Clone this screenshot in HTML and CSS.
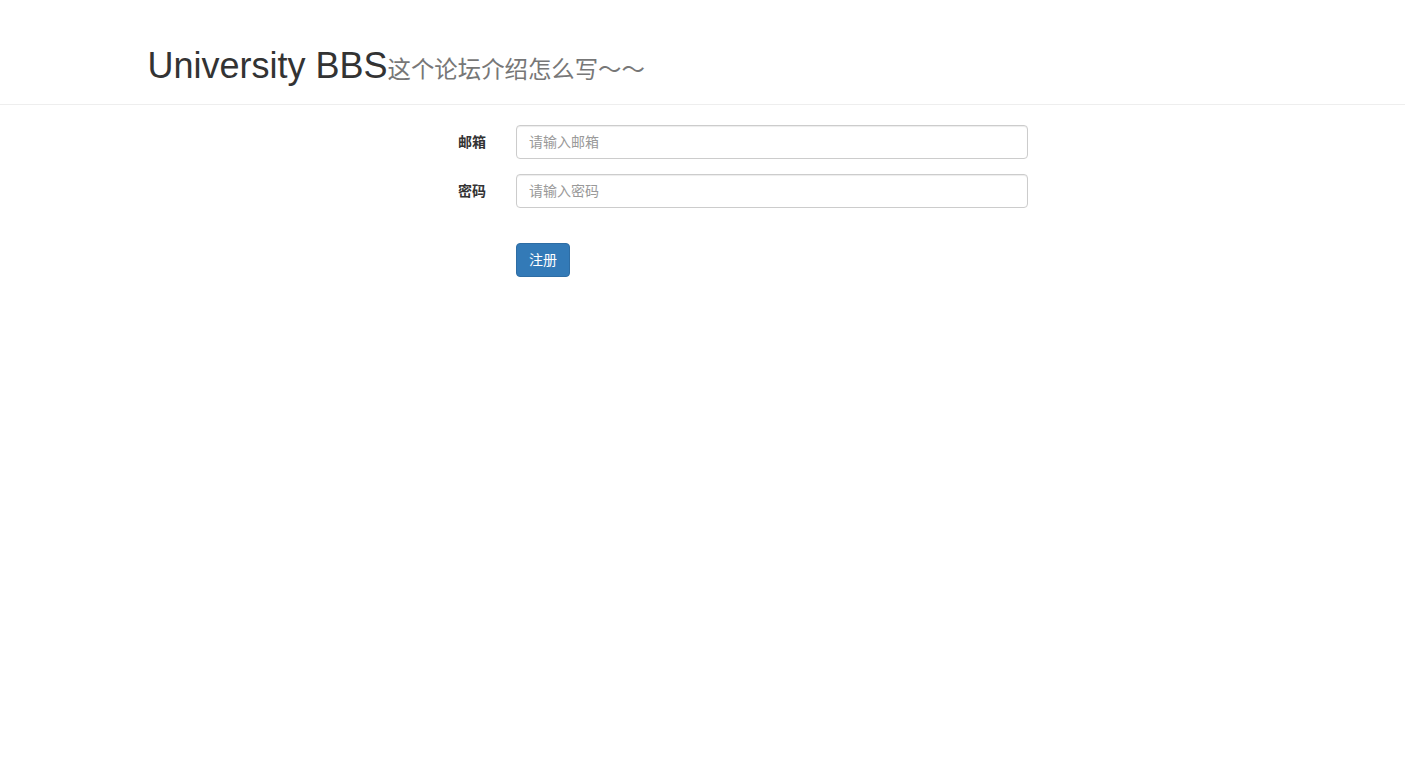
FILE: index.html
```html
<!DOCTYPE html>
<html lang="zh-CN">
<head>
<meta charset="utf-8">
<title>University BBS</title>
<link rel="stylesheet" href="styles.css">
</head>
<body>
<header class="page-header">
  <div class="container">
    <h1 class="title">University BBS<small class="subtitle">这个论坛介绍怎么写～～</small></h1>
  </div>
</header>
<main class="container">
  <form class="form-horizontal">
    <div class="form-group">
      <label class="control-label" for="email">邮箱</label>
      <div class="control-col"><input class="form-control" id="email" type="email" placeholder="请输入邮箱"></div>
    </div>
    <div class="form-group">
      <label class="control-label" for="pwd">密码</label>
      <div class="control-col"><input class="form-control" id="pwd" type="password" placeholder="请输入密码"></div>
    </div>
    <div class="form-group form-actions">
      <div class="spacer"></div>
      <div class="control-col"><button class="btn-primary" type="submit">注册</button></div>
    </div>
  </form>
</main>
</body>
</html>
```
FILE: styles.css
```css
html, body {
  margin: 0;
  padding: 0;
  background: #fff;
}
body {
  font-family: "Liberation Sans", "Noto Sans CJK SC", sans-serif;
  font-size: 14px;
  line-height: 1.42857;
  color: #333;
}
.container {
  width: 1170px;
  margin: 0 auto;
  padding: 0 15px;
  box-sizing: border-box;
}
.page-header {
  border-bottom: 1px solid #eee;
  padding-top: 46px;
  padding-bottom: 8px;
  margin-bottom: 20px;
}
.title {
  margin: 0 0 10px 0;
  padding-left: 15px;
  font-size: 36px;
  font-weight: 500;
  line-height: 1.1;
  color: #333;
  font-family: "Liberation Sans", "Noto Sans CJK SC", sans-serif;
}
.subtitle {
  font-size: 65%;
  font-weight: 400;
  color: #777;
  font-family: "Noto Sans CJK SC", sans-serif;
}
.form-horizontal {
  display: block;
}
.form-group {
  display: grid;
  grid-template-columns: 368.5px 542px;
  margin-bottom: 15px;
}
.form-actions {
  padding-top: 20px;
}
.control-label {
  text-align: right;
  padding-right: 15px;
  padding-top: 6px;
  font-weight: 700;
  font-family: "Noto Sans CJK SC", sans-serif;
  font-size: 14px;
  line-height: 20px;
}
.control-col {
  padding-left: 15px;
  padding-right: 15px;
}
.form-control {
  display: block;
  width: 100%;
  height: 34px;
  box-sizing: border-box;
  padding: 5px 12px 7px;
  font-size: 14px;
  line-height: 20px;
  color: #555;
  background: #fff;
  border: 1px solid #ccc;
  border-radius: 4px;
  box-shadow: inset 0 1px 1px rgba(0,0,0,.075);
  font-family: "Noto Sans CJK SC", sans-serif;
  outline: none;
}
.form-control::placeholder {
  color: #999;
}
.btn-primary {
  display: inline-block;
  height: 34px;
  padding: 5px 12px 7px;
  font-size: 14px;
  line-height: 20px;
  color: #fff;
  background: #337ab7;
  border: 1px solid #2e6da4;
  border-radius: 4px;
  font-family: "Noto Sans CJK SC", sans-serif;
  cursor: pointer;
}
```
